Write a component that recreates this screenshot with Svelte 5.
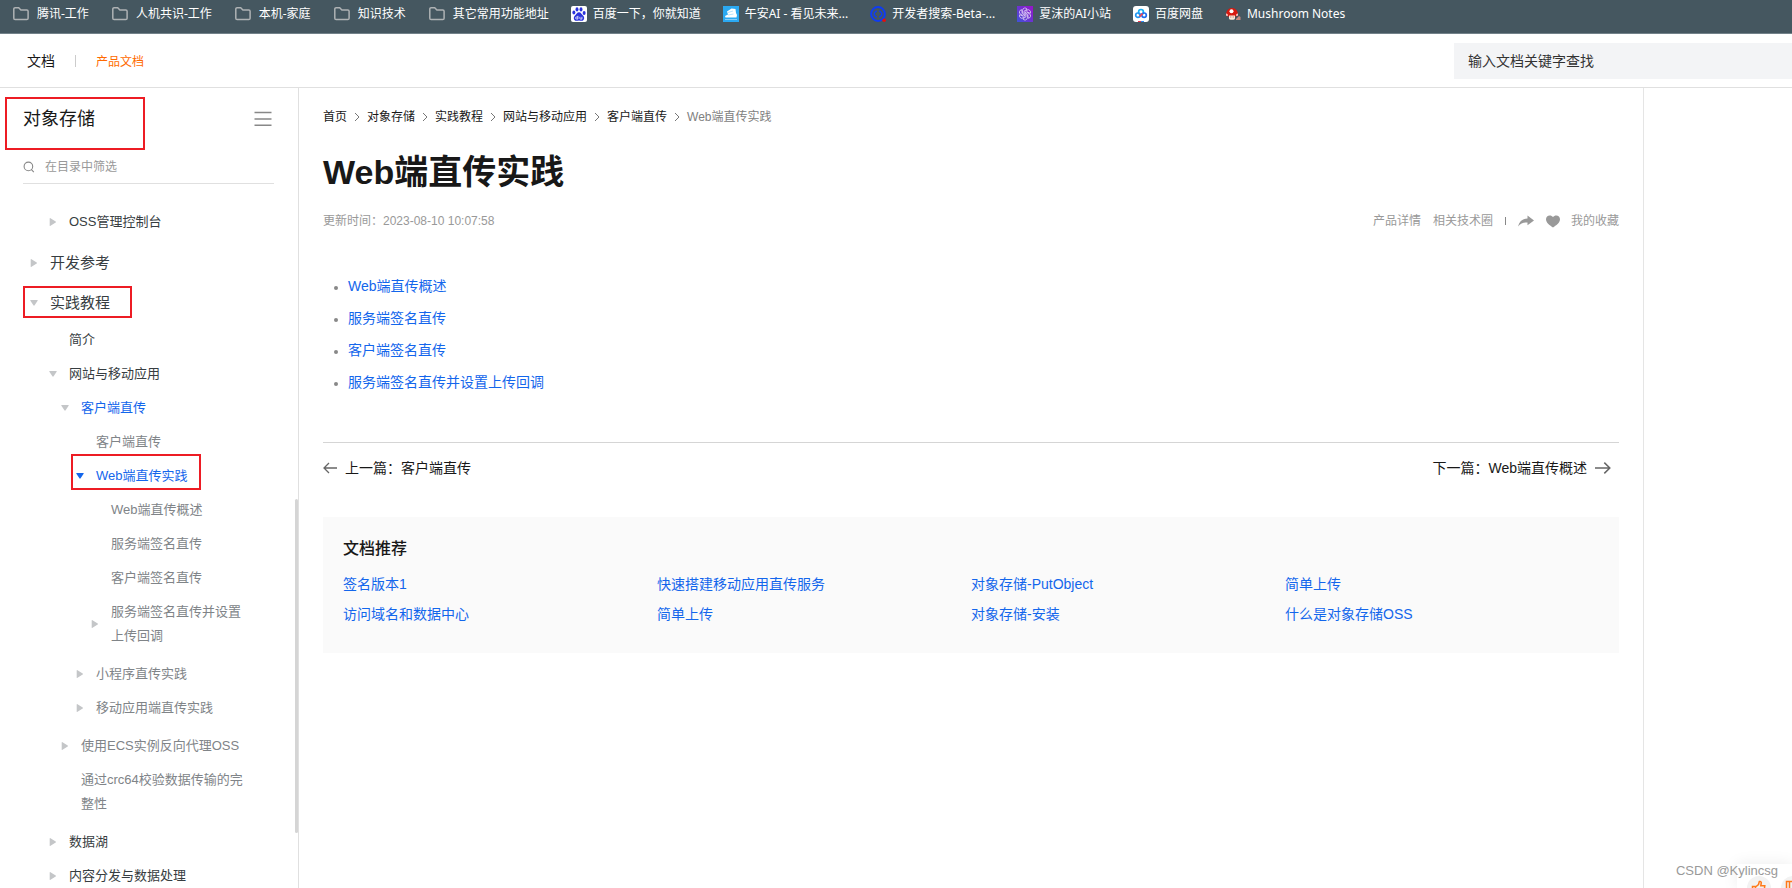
<script lang="ts">
	type Node = {
		label: string;
		open?: boolean;
		children?: Node[];
		active?: boolean;
		mark?: 'section' | 'page';
	};

	const bookmarks = [
		{ icon: 'folder', label: '腾讯-工作' },
		{ icon: 'folder', label: '人机共识-工作' },
		{ icon: 'folder', label: '本机-家庭' },
		{ icon: 'folder', label: '知识技术' },
		{ icon: 'folder', label: '其它常用功能地址' },
		{ icon: 'baidu', label: '百度一下，你就知道' },
		{ icon: 'wuan', label: '午安AI - 看见未来...' },
		{ icon: 'dev', label: '开发者搜索-Beta-...' },
		{ icon: 'gpt', label: '夏沫的AI小站' },
		{ icon: 'pan', label: '百度网盘' },
		{ icon: 'mushroom', label: 'Mushroom Notes' }
	];

	// Collapsed branches keep an empty child list so they still get an arrow.
	const consoleNodes: Node[] = $state([{ label: 'OSS管理控制台', children: [] }]);
	const tree: Node[] = $state([
		{ label: '开发参考', children: [] },
		{
			label: '实践教程',
			open: true,
			mark: 'section',
			children: [
				{ label: '简介' },
				{
					label: '网站与移动应用',
					open: true,
					children: [
						{
							label: '客户端直传',
							open: true,
							active: true,
							children: [
								{ label: '客户端直传' },
								{
									label: 'Web端直传实践',
									open: true,
									active: true,
									mark: 'page',
									children: [
										{ label: 'Web端直传概述' },
										{ label: '服务端签名直传' },
										{ label: '客户端签名直传' },
										{ label: '服务端签名直传并设置上传回调', children: [] }
									]
								},
								{ label: '小程序直传实践', children: [] },
								{ label: '移动应用端直传实践', children: [] }
							]
						},
						{ label: '使用ECS实例反向代理OSS', children: [] },
						{ label: '通过crc64校验数据传输的完整性' }
					]
				},
				{ label: '数据湖', children: [] },
				{ label: '内容分发与数据处理', children: [] }
			]
		}
	]);

	const crumbs = ['首页', '对象存储', '实践教程', '网站与移动应用', '客户端直传'];
	const topics = ['Web端直传概述', '服务端签名直传', '客户端签名直传', '服务端签名直传并设置上传回调'];
	const related = [
		'签名版本1',
		'快速搭建移动应用直传服务',
		'对象存储-PutObject',
		'简单上传',
		'访问域名和数据中心',
		'简单上传',
		'对象存储-安装',
		'什么是对象存储OSS'
	];
</script>

{#snippet bookmarkIcon(name: string)}
	{#if name === 'folder'}
		<svg class="folder" width="18" height="16" viewBox="0 0 18 16" fill="none" stroke="#aeb2b4" stroke-width="1.5">
			<path d="M1.8 3a1.3 1.3 0 0 1 1.3-1.3h3.6l2.2 2.3h5.9a1.3 1.3 0 0 1 1.3 1.3v6.9a1.3 1.3 0 0 1-1.3 1.3H3.1a1.3 1.3 0 0 1-1.3-1.3z" />
		</svg>
	{:else if name === 'baidu'}
		<svg width="16" height="16" viewBox="0 0 16 16">
			<rect width="16" height="16" rx="2" fill="#fff" />
			<g fill="#2a32dc">
				<ellipse cx="6" cy="3.4" rx="1.5" ry="2.1" />
				<ellipse cx="10" cy="3.4" rx="1.5" ry="2.1" />
				<ellipse cx="2.9" cy="6.6" rx="1.5" ry="2" />
				<ellipse cx="13.1" cy="6.9" rx="1.5" ry="2" />
				<path d="M8 6.3c2 0 2.6 2 4 3.2 2.1 1.9 1.3 5.3-1.3 5.3-1.1 0-1.7-.3-2.7-.3s-1.6.3-2.7.3c-2.6 0-3.4-3.4-1.3-5.3C5.4 8.3 6 6.3 8 6.3z" />
			</g>
			<path d="M6.9 9.8v3.2H5.6a1 1 0 0 1 0-2h1.3M8.9 10.8v1.6q0 .7.7.7h1.3v-2.3" fill="none" stroke="#fff" stroke-width=".8" />
		</svg>
	{:else if name === 'wuan'}
		<svg width="16" height="16" viewBox="0 0 16 16">
			<rect width="16" height="16" fill="#2ba9f2" />
			<path d="m4 5.5 4.500-3 4 .5.5 4 1 2-.5 2.500H2.500L2 10l3-1.500z" fill="#fff" />
			<path d="m5 6.500 5-1.500M5 9l5.500-1" stroke="#9ad5f8" stroke-width=".7" />
			<path d="M2 13.5h12" stroke="#86cdf7" />
		</svg>
	{:else if name === 'dev'}
		<svg width="16" height="16" viewBox="0 0 16 16" fill="none">
			<circle cx="8" cy="8" r="6.9" stroke="#0f3cf2" stroke-width="2" />
			<path d="M6.900 5.200H6L4.300 7v2L6 10.800h.9M9.100 5.200h.9L11.700 7v2L10 10.800h-.9" stroke="#0f3cf2" stroke-width="1.500" />
			<circle cx="14.200" cy="14.200" r="1.800" fill="#e60d0d" />
		</svg>
	{:else if name === 'gpt'}
		<svg width="16" height="16" viewBox="0 0 16 16" fill="none">
			<defs>
				<linearGradient id="gpt-bg" x1="0" y1="1" x2="1" y2="0">
					<stop offset="0" stop-color="#3f53d9" />
					<stop offset="1" stop-color="#9a12c8" />
				</linearGradient>
			</defs>
			<rect width="16" height="16" fill="url(#gpt-bg)" />
			<g stroke="#dccbf5" stroke-width=".8">
				{#each [0, 60, 120, 180, 240, 300] as angle}
					<path d="M5.600 7V4.300a2.400 2.400 0 0 1 4.500-1.100L7 5.200v3.400" transform="rotate({angle} 8 8)" />
				{/each}
			</g>
		</svg>
	{:else if name === 'pan'}
		<svg width="16" height="16" viewBox="0 0 16 16" fill="none">
			<rect width="16" height="16" rx="3" fill="#fff" />
			<g stroke-width="1.7">
				<circle cx="8" cy="5.900" r="2.400" stroke="#18b0f5" />
				<circle cx="4.900" cy="9.200" r="2.200" stroke="#2196f3" />
				<circle cx="11.100" cy="9.200" r="2.200" stroke="#1d6df0" />
				<path d="m6.500 10.700 3-3" stroke="#f0405a" />
			</g>
			<path d="M5 15.500h3" stroke="#f0304a" />
			<path d="M8 15.500h3" stroke="#2a8df5" />
		</svg>
	{:else}
		<svg width="16" height="16" viewBox="0 0 16 16">
			<path d="M1 9c0-4 2.300-7 6-7s6 3 6 7c0 1-1 1.400-2 1.400H3C2 10.400 1 10 1 9z" fill="#d8190f" />
			<circle cx="6.500" cy="5.300" r="2" fill="#fff" />
			<path d="M1.200 7.500a1.600 1.600 0 0 1 1.300 2.400l-1.200-.2zM12.800 7.500a1.600 1.600 0 0 0-1.300 2.400l1.200-.2z" fill="#fff" />
			<path d="M4 9.500h6v2.700q0 1.500-3 1.500t-3-1.500z" fill="#fbe9d8" />
			<path d="M5.800 10.200v1.600M8.200 10.200v1.600" stroke="#a55" stroke-width=".6" />
			<path d="m11 13 3-3 1.500 1v3H11z" fill="#c98a80" />
		</svg>
	{/if}
{/snippet}

{#snippet branch(nodes: Node[], level: number)}
	<ul class="level-{level}">
		{#each nodes as node}
			<li>
				<div class="row" class:mark-section={node.mark === 'section'} class:mark-page={node.mark === 'page'}>
					{#if node.children}
						<button
							type="button"
							class="toggle"
							class:current={node.mark === 'page'}
							aria-label={node.label}
							aria-expanded={!!node.open}
							onclick={() => (node.open = !node.open)}
						>
							{#if node.open}
								<svg width="10" height="10" viewBox="1 0 10 10">
									<path d="M1.8 2h6.4q.9 0 .4.8L5.600 7.300q-.6.7-1.200 0L1.400 2.800Q.9 2 1.800 2z" />
								</svg>
							{:else}
								<svg width="10" height="10" viewBox="0 0 10 10">
									<path d="M.7 1.600q0-.9.8-.4l5.200 3.200q.7.6 0 1.200L1.500 8.800q-.8.5-.8-.4z" />
								</svg>
							{/if}
						</button>
					{:else}
						<span class="toggle"></span>
					{/if}
					<a href="#doc" class:active={node.active}>{node.label}</a>
				</div>
				{#if node.open && node.children?.length}
					{@render branch(node.children, level + 1)}
				{/if}
			</li>
		{/each}
	</ul>
{/snippet}

<div class="page">
	<nav class="bookmarks">
		{#each bookmarks as mark}
			<a href="#bookmark">
				{@render bookmarkIcon(mark.icon)}
				<span>{mark.label}</span>
			</a>
		{/each}
	</nav>

	<header class="topbar">
		<a class="home" href="#docs">文档</a>
		<span class="divider"></span>
		<a class="product" href="#product">产品文档</a>
		<input type="search" placeholder="输入文档关键字查找" aria-label="输入文档关键字查找" />
	</header>

	<div class="body">
		<aside class="sidebar">
			<div class="side-head">
				<h2>对象存储</h2>
				<button type="button" class="menu" aria-label="目录">
					<svg width="18" height="16" viewBox="0 0 18 16" stroke="#888" stroke-width="1.5">
						<path d="M.5 1.500h17M.5 8h17M.5 14.300h17" />
					</svg>
				</button>
			</div>
			<label class="filter">
				<svg width="12" height="12" viewBox="0 0 12 12" fill="none" stroke="#888" stroke-width="1.1">
					<circle cx="5.400" cy="5.400" r="4.300" />
					<path d="m8.200 8.400 2.600 2.800" />
				</svg>
				<input type="text" placeholder="在目录中筛选" />
			</label>
			<div class="tree">
				{@render branch(consoleNodes, 2)}
				{@render branch(tree, 1)}
			</div>
			<div class="scrollbar"></div>
		</aside>

		<main>
			<nav class="crumbs">
				{#each crumbs as crumb}
					<a href="#crumb">{crumb}</a>
					<svg width="6" height="10" viewBox="0 0 6 10" fill="none" stroke="#777">
						<path d="m1 1 4 4-4 4" />
					</svg>
				{/each}
				<span>Web端直传实践</span>
			</nav>

			<h1>Web端直传实践</h1>

			<div class="meta">
				<span class="updated">更新时间：2023-08-10 10:07:58</span>
				<a href="#detail">产品详情</a>
				<a href="#community">相关技术圈</a>
				<span class="bar"></span>
				<button type="button" aria-label="分享">
					<svg width="16" height="12" viewBox="0 0 16 12" fill="#999">
						<path d="M9.500.5 16 5.400l-6.500 4.800V7.400C5.500 7.200 2.500 8.400 0 11.500 1.200 6.500 4.500 3.700 9.500 3.400z" />
					</svg>
				</button>
				<button type="button" class="favorite">
					<svg width="14" height="13" viewBox="0 0 14 13" fill="#999">
						<path d="M7 12.600C4 10.300 0 7.800 0 4.200 0 1.900 1.700.4 3.700.4 5.100.4 6.300 1 7 2.100 7.700 1 8.900.4 10.300.4c2 0 3.700 1.500 3.700 3.800 0 3.600-4 6.100-7 8.400z" />
					</svg>
					我的收藏
				</button>
			</div>

			<ul class="topics">
				{#each topics as topic}
					<li><a href="#topic">{topic}</a></li>
				{/each}
			</ul>

			<div class="pager">
				<a href="#prev">
					<svg width="14" height="12" viewBox="0 0 14 12" fill="none" stroke="#666" stroke-width="1.3">
						<path d="M14 6H1.200M6 1 1 6l5 5" />
					</svg>
					上一篇：客户端直传
				</a>
				<a class="next" href="#next">
					下一篇：Web端直传概述
					<svg width="16" height="12" viewBox="0 0 16 12" fill="none" stroke="#666" stroke-width="1.5">
						<path d="M0 6h14.500M9.300.6 14.800 6l-5.500 5.400" />
					</svg>
				</a>
			</div>

			<section class="related">
				<h3>文档推荐</h3>
				<div class="grid">
					{#each related as item}
						<a href="#related">{item}</a>
					{/each}
				</div>
			</section>
		</main>

		<aside class="rail"></aside>
	</div>

	<div class="feedback">
		<button type="button" aria-label="有帮助">
			<svg width="16" height="16" viewBox="0 0 16 16" fill="none" stroke="#ff7a1a" stroke-width="1.5">
				<path d="M1.500 6.500h3v8h-3zM4.500 7l3-2.500.8-3q1.800-.5 2 1.200l-.5 3h4l-1 7.500q-.2 1.300-1.500 1.300H4.500" />
			</svg>
		</button>
		<button type="button" aria-label="没有帮助">
			<svg width="16" height="16" viewBox="0 0 16 16" fill="none" stroke="#ff7a1a" stroke-width="1.5">
				<path d="M1.500 1.500h3v8h-3zM4.500 1.500h8l1.500 8h-4v4.500H8L4.500 9" />
			</svg>
		</button>
	</div>
	<div class="watermark">CSDN @Kylincsg</div>
</div>

<style>
	:global(body) {
		margin: 0;
		background: #fff;
	}
	.page {
		position: relative;
		display: flex;
		flex-direction: column;
		height: 100vh;
		overflow: hidden;
		font-family: 'Liberation Sans', 'Noto Sans CJK SC', sans-serif;
		font-size: 14px;
		color: #181818;
	}
	a {
		color: inherit;
		text-decoration: none;
	}
	button {
		padding: 0;
		border: none;
		background: none;
		color: inherit;
		font: inherit;
		cursor: pointer;
	}
	input {
		border: none;
		outline: none;
		font: inherit;
	}
	ul {
		margin: 0;
		padding: 0;
		list-style: none;
	}
	svg {
		flex: none;
		display: block;
	}

	.bookmarks {
		flex: none;
		display: flex;
		gap: 22px;
		padding: 4px 12px 9px;
		background: #455760;
		border-bottom: 1px solid #73828a;
		color: #fff;
		font-family: 'Noto Sans', 'Noto Sans CJK SC', sans-serif;
		font-size: 12px;
		line-height: 20px;
		white-space: nowrap;
	}
	.bookmarks a {
		display: flex;
		align-items: center;
		gap: 6px;
	}
	.bookmarks .folder {
		margin-right: 1px;
	}

	.topbar {
		flex: none;
		display: flex;
		align-items: center;
		padding: 9px 0 8px 27px;
		border-bottom: 1px solid #e0e0e0;
	}
	.topbar a {
		padding-bottom: 2px;
	}
	.topbar .divider {
		width: 1px;
		height: 12px;
		margin: 0 20px;
		background: #ccc;
	}
	.topbar .product {
		color: #ff6a00;
		font-size: 12px;
	}
	.topbar input {
		width: 338px;
		height: 36px;
		box-sizing: border-box;
		margin-left: auto;
		padding: 0 14px;
		background: #f3f4f6;
	}
	.topbar input::placeholder {
		color: #333;
		opacity: 1;
	}

	.body {
		flex: 1;
		min-height: 0;
		display: flex;
	}
	.sidebar {
		position: relative;
		flex: none;
		width: 298px;
		overflow: hidden;
		border-right: 1px solid #e0e0e0;
	}
	.side-head {
		position: relative;
		display: flex;
		align-items: center;
		justify-content: space-between;
		padding: 16px 26px 16px 23px;
	}
	.side-head h2 {
		margin: 0;
		font-size: 18px;
		font-weight: 400;
		line-height: 30px;
	}
	.side-head::after,
	.mark-section::after,
	.mark-page::after {
		content: '';
		position: absolute;
		box-sizing: border-box;
		border: 2px solid #ed1c24;
		pointer-events: none;
	}
	.side-head::after {
		left: 5px;
		top: 9px;
		width: 140px;
		height: 53px;
	}
	.filter {
		display: flex;
		align-items: center;
		gap: 10px;
		height: 33px;
		margin: 0 24px 21px 23px;
		border-bottom: 1px solid #e0e0e0;
		font-size: 12px;
	}
	.filter input {
		flex: 1;
		min-width: 0;
		padding: 0;
	}
	.filter input::placeholder {
		color: #999;
		opacity: 1;
	}

	.tree {
		padding: 0 46px 0 30px;
		color: #808488;
		font-size: 13px;
		line-height: 24px;
	}
	.tree ul {
		padding-bottom: 4px;
	}
	.tree .level-2 {
		padding-left: 19px;
		color: #373d41;
	}
	.tree .level-3 {
		padding-left: 12px;
	}
	.tree .level-3 {
		color: #808488;
	}
	.tree .level-4,
	.tree .level-5 {
		padding-left: 15px;
	}
	.row {
		position: relative;
		display: flex;
		align-items: center;
		padding: 5px 0;
	}
	.level-1 > li > .row {
		padding: 8px 0;
		color: #373d41;
		font-size: 15px;
	}
	.mark-section::after {
		left: -7px;
		top: 3px;
		width: 109px;
		height: 32px;
	}
	.mark-page::after {
		left: -5px;
		top: -5px;
		width: 130px;
		height: 36px;
	}
	.toggle {
		flex: none;
		width: 20px;
		color: #c4c6c8;
	}
	.toggle svg {
		fill: currentColor;
	}
	.toggle.current,
	.tree a.active {
		color: #1366ec;
	}
	.scrollbar {
		position: absolute;
		right: 0;
		top: 411px;
		width: 3px;
		height: 334px;
		border-radius: 2px;
		background: #d5d5d5;
	}

	main {
		flex: 1;
		min-width: 0;
		padding: 19px 24px;
	}
	.crumbs {
		display: flex;
		align-items: center;
		gap: 7px;
		font-size: 12px;
		line-height: 20px;
	}
	.crumbs span {
		color: #808080;
	}
	h1 {
		margin: 21px 0 15px;
		font-size: 34px;
		line-height: 48px;
	}
	.meta {
		display: flex;
		align-items: center;
		gap: 12px;
		color: #999;
		font-size: 12px;
		line-height: 20px;
	}
	.meta .updated {
		margin-right: auto;
	}
	.meta .bar {
		width: 1px;
		height: 8px;
		background: #888;
	}
	.meta .favorite {
		display: flex;
		align-items: center;
		gap: 11px;
	}
	.topics {
		margin: 39px 0 44px;
		line-height: 32px;
	}
	.topics li {
		display: flex;
		align-items: center;
		gap: 10px;
		padding-left: 11px;
	}
	.topics li::before {
		content: '';
		width: 4px;
		height: 4px;
		margin-top: 3px;
		border-radius: 50%;
		background: #888;
	}
	.topics a,
	.related a {
		color: #1366ec;
	}
	.pager {
		display: flex;
		justify-content: space-between;
		padding: 14px 8px 38px 0;
		border-top: 1px solid #d5d5d5;
		line-height: 22px;
	}
	.pager a {
		display: flex;
		align-items: center;
		gap: 8px;
	}
	.related {
		padding: 20px 20px 24px;
		background: #fafafa;
	}
	.related h3 {
		margin: 0 0 8px;
		font-size: 16px;
		font-weight: 500;
		line-height: 24px;
	}
	.grid {
		display: grid;
		grid-template-columns: repeat(4, 1fr);
		line-height: 30px;
	}
	.rail {
		flex: none;
		width: 148px;
		border-left: 1px solid #e5e5e5;
	}

	.feedback {
		position: absolute;
		right: 0;
		bottom: 0;
		display: flex;
		gap: 10px;
		width: 45px;
		height: 12px;
		padding: 12px 0 0 10px;
		background: #fff;
		box-shadow: 0 0 16px rgba(0, 0, 0, 0.08);
	}
	.feedback button {
		flex: none;
		display: flex;
		align-items: center;
		justify-content: center;
		width: 24px;
		height: 24px;
		border-radius: 50%;
		background: #f2f2f2;
	}
	.watermark {
		position: absolute;
		right: 14px;
		bottom: 7px;
		color: #999;
		font-size: 13px;
		line-height: 20px;
	}
</style>
